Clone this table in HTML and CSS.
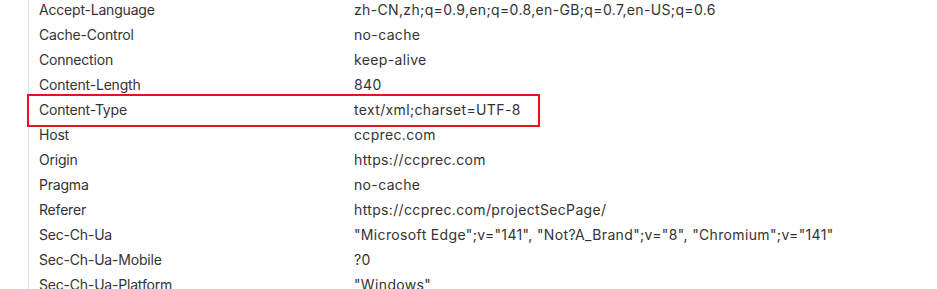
FILE: index.html
```html
<!DOCTYPE html>
<html lang="en">
<head>
    <meta charset="UTF-8" />
    <meta name="viewport" content="width=device-width, initial-scale=1.0">
    <title>Request Headers</title>
    <link rel="stylesheet" href="styles.css">
</head>
<body>
    <div class="headers">
        <div class="row"><span class="name">Accept-Language</span><span class="value">zh-CN,zh;q=0.9,en;q=0.8,en-GB;q=0.7,en-US;q=0.6</span></div>
        <div class="row"><span class="name">Cache-Control</span><span class="value">no-cache</span></div>
        <div class="row"><span class="name">Connection</span><span class="value">keep-alive</span></div>
        <div class="row"><span class="name">Content-Length</span><span class="value">840</span></div>
        <div class="row marked"><span class="name">Content-Type</span><span class="value">text/xml;charset=UTF-8</span></div>
        <div class="row"><span class="name">Host</span><span class="value">ccprec.com</span></div>
        <div class="row"><span class="name">Origin</span><span class="value">https://ccprec.com</span></div>
        <div class="row"><span class="name">Pragma</span><span class="value">no-cache</span></div>
        <div class="row"><span class="name">Referer</span><span class="value">https://ccprec.com/projectSecPage/</span></div>
        <div class="row"><span class="name">Sec-Ch-Ua</span><span class="value">"Microsoft Edge";v="141", "Not?A_Brand";v="8", "Chromium";v="141"</span></div>
        <div class="row"><span class="name">Sec-Ch-Ua-Mobile</span><span class="value">?0</span></div>
        <div class="row"><span class="name">Sec-Ch-Ua-Platform</span><span class="value">"Windows"</span></div>
    </div>
</body>
</html>
```

FILE: styles.css
```css
body {
    margin: 0;
    height: 289px;
    overflow: hidden;
    background-color: #fff;
    font-family: Inter, "Open Sans", Arial, sans-serif;
    font-size: 14px;
    color: #333;
}

.headers {
    margin-left: 28px;
    margin-top: -3px;
    border-left: 1px solid #d3e3f6;
}

.row {
    display: grid;
    grid-template-columns: 315px 1fr;
    align-items: center;
    height: 25px;
    padding-left: 10px;
    white-space: nowrap;
}

.name {
    letter-spacing: -0.2px;
}

.value {
    letter-spacing: 0.35px;
}

.marked {
    position: relative;
}

.marked::after {
    content: "";
    position: absolute;
    left: -2px;
    top: -3px;
    width: 513px;
    height: 33px;
    border: 2px solid #e8121c;
    box-sizing: border-box;
}
```
